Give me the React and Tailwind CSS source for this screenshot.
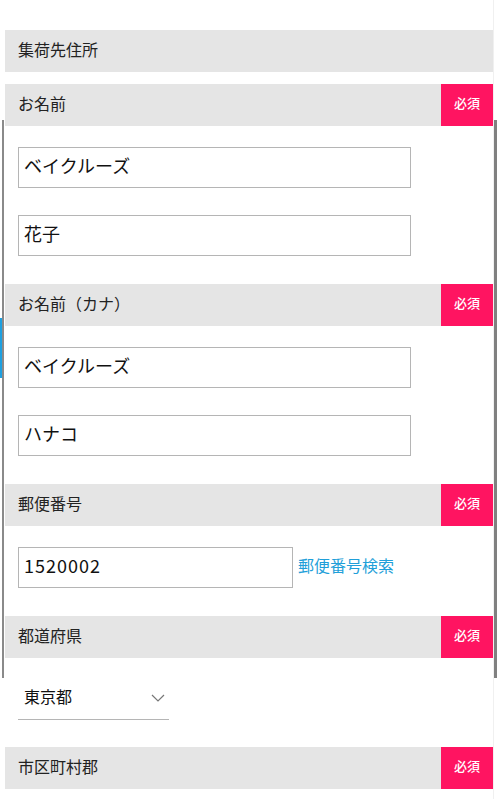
const font = { fontFamily: '"Noto Sans CJK JP", "Liberation Sans", sans-serif' };

function Header({ label, required }) {
  return (
    <div className="flex h-[42px] items-stretch bg-[#e5e5e5]">
      <span className="flex flex-1 items-center pb-[5px] pl-[13px] text-[16px] leading-none text-[#222]">{label}</span>
      {required && (
        <span className="flex w-[52px] items-center justify-center bg-[#ff1461] pb-[5px] text-[13px] font-medium leading-none text-white">
          必須
        </span>
      )}
    </div>
  );
}

function Field({ value, className = 'w-[393px]' }) {
  return (
    <div
      className={`flex h-[41px] items-center border border-[#b5b5b5] bg-white pb-[5px] pl-[5px] text-[18px] leading-none text-[#111] ${className}`}
    >
      {value}
    </div>
  );
}

export default function App() {
  return (
    <div className="relative h-[799px] w-[498px] overflow-hidden bg-white" style={font}>
      <div className="flex w-[493px] flex-col pl-[5px] pt-[30px]">
        <Header label="集荷先住所" />
        <div className="mt-[12px]">
          <Header label="お名前" required />
        </div>
        <div className="flex flex-col gap-[27px] px-[13px] pb-[28px] pt-[21px]">
          <Field value="ベイクルーズ" />
          <Field value="花子" />
        </div>
        <Header label="お名前（カナ）" required />
        <div className="flex flex-col gap-[27px] px-[13px] pb-[28px] pt-[21px]">
          <Field value="ベイクルーズ" />
          <Field value="ハナコ" />
        </div>
        <Header label="郵便番号" required />
        <div className="flex items-center gap-[5px] px-[13px] pb-[28px] pt-[21px]">
          <Field value="1520002" className="w-[275px] tracking-[1px]" />
          <span className="pb-[5px] text-[16px] leading-none text-[#1f9fd9]">郵便番号検索</span>
        </div>
        <Header label="都道府県" required />
        <div className="px-[13px] pb-[27px] pt-[20px]">
          <div className="flex h-[42px] w-[151px] items-center justify-between border-b border-[#b5b5b5] pl-[6px] pr-[4px]">
            <span className="pb-[5px] text-[16px] leading-none text-[#111]">東京都</span>
            <svg width="14" height="8" viewBox="0 0 14 8" fill="none" stroke="#777" strokeWidth="1.2" className="mb-[2px]">
              <path d="M1 1l6 6 6-6" />
            </svg>
          </div>
        </div>
        <Header label="市区町村郡" required />
      </div>

      {/* frame lines over the content */}
      <div className="absolute left-[2px] top-[120px] h-[558px] w-[2px] bg-[#8a8a8a]" />
      <div className="absolute left-0 top-[318px] h-[60px] w-[2px] bg-[#1ea0e0]" />
      <div className="absolute right-[4px] top-0 h-full w-px bg-[#f0f0f0]" />
      <div className="absolute right-[1px] top-[120px] h-[558px] w-[3px] bg-[#808080]" />
    </div>
  );
}
